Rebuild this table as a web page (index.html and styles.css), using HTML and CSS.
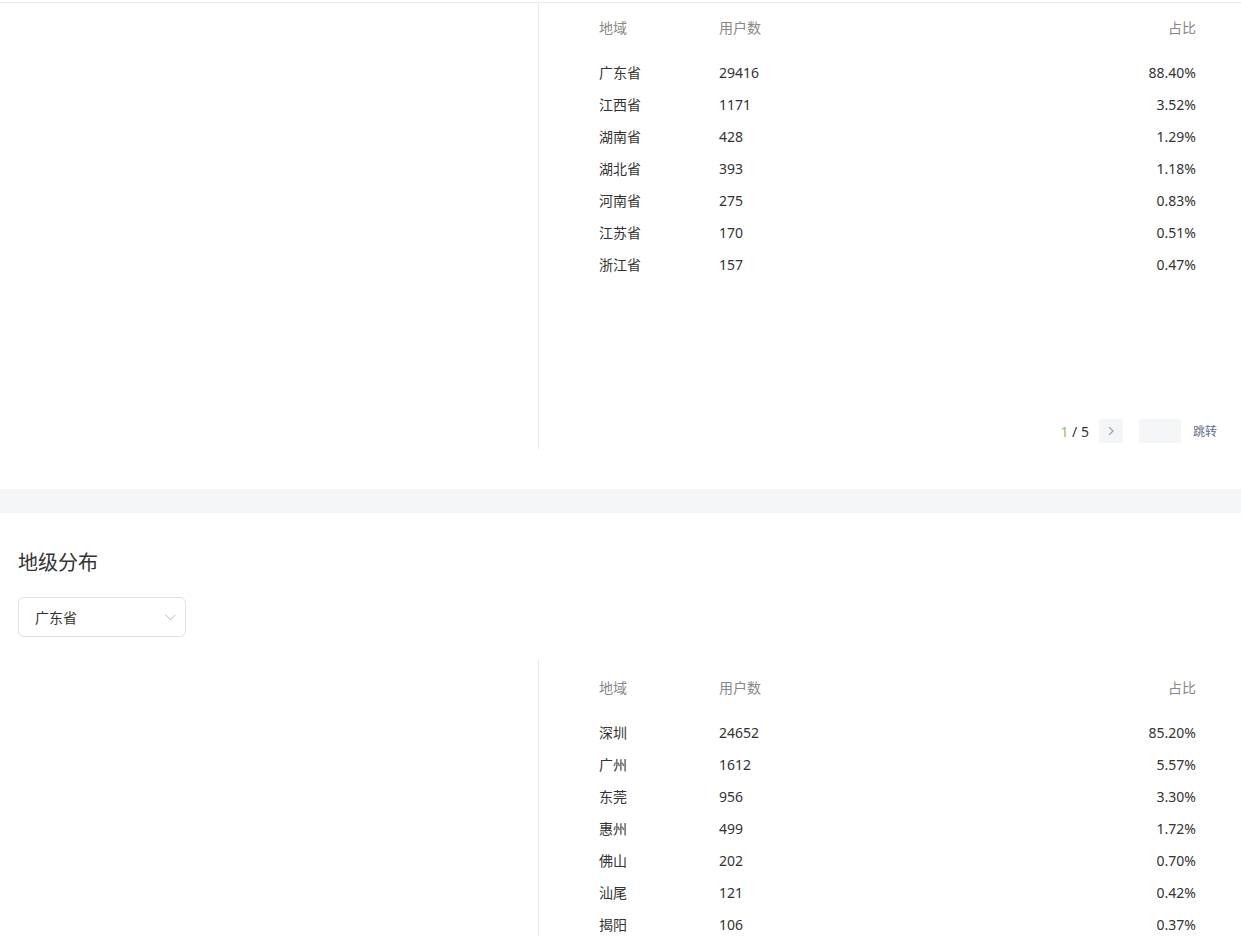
FILE: index.html
```html
<!DOCTYPE html>
<html lang="zh-CN">
<head>
  <meta charset="UTF-8" />
  <meta name="viewport" content="width=device-width, initial-scale=1.0" />
  <title>地域分布</title>
  <link rel="stylesheet" href="styles.css">
</head>
<body>

  <!-- 省级分布 -->
  <div class="card card-top">
    <div class="split">
      <div class="chart"></div>
      <div class="table-wrap">
        <table class="region-table">
          <thead>
            <tr><th>地域</th><th>用户数</th><th class="num">占比</th></tr>
          </thead>
          <tbody>
            <tr><td>广东省</td><td>29416</td><td class="num">88.40%</td></tr>
            <tr><td>江西省</td><td>1171</td><td class="num">3.52%</td></tr>
            <tr><td>湖南省</td><td>428</td><td class="num">1.29%</td></tr>
            <tr><td>湖北省</td><td>393</td><td class="num">1.18%</td></tr>
            <tr><td>河南省</td><td>275</td><td class="num">0.83%</td></tr>
            <tr><td>江苏省</td><td>170</td><td class="num">0.51%</td></tr>
            <tr><td>浙江省</td><td>157</td><td class="num">0.47%</td></tr>
          </tbody>
        </table>

        <div class="pager">
          <span class="pager-count"><em>1</em> / 5</span>
          <button class="pager-btn" type="button">
            <svg width="10" height="10" viewBox="0 0 10 10"><path d="M3.2 1.2 L7 5 L3.2 8.8" fill="none" stroke="#999" stroke-width="1.1"/></svg>
          </button>
          <input class="pager-input" type="text" />
          <span class="pager-go">跳转</span>
        </div>
      </div>
    </div>
  </div>

  <div class="band"></div>

  <!-- 地级分布 -->
  <div class="card card-city">
    <h2 class="title">地级分布</h2>
    <div class="select">
      <span>广东省</span>
      <svg width="11" height="7" viewBox="0 0 11 7"><path d="M0.5 0.8 L5.5 5.8 L10.5 0.8" fill="none" stroke="#b8b8b8" stroke-width="1"/></svg>
    </div>

    <div class="split split-city">
      <div class="chart"></div>
      <div class="table-wrap">
        <table class="region-table">
          <thead>
            <tr><th>地域</th><th>用户数</th><th class="num">占比</th></tr>
          </thead>
          <tbody>
            <tr><td>深圳</td><td>24652</td><td class="num">85.20%</td></tr>
            <tr><td>广州</td><td>1612</td><td class="num">5.57%</td></tr>
            <tr><td>东莞</td><td>956</td><td class="num">3.30%</td></tr>
            <tr><td>惠州</td><td>499</td><td class="num">1.72%</td></tr>
            <tr><td>佛山</td><td>202</td><td class="num">0.70%</td></tr>
            <tr><td>汕尾</td><td>121</td><td class="num">0.42%</td></tr>
            <tr><td>揭阳</td><td>106</td><td class="num">0.37%</td></tr>
          </tbody>
        </table>
      </div>
    </div>
  </div>

</body>
</html>
```

FILE: styles.css
```css
html, body {
  margin: 0;
  padding: 0;
}
body {
  font-family: "Noto Sans", "Noto Sans CJK SC", sans-serif;
  font-size: 14px;
  color: #333;
  background: #fff;
  overflow: hidden;
}

.card-top {
  margin-top: 2px;
  border-top: 1px solid #ececec;
}

.split {
  display: flex;
  height: 446px;
}
.chart {
  box-sizing: border-box;
  width: 539px;
  border-right: 1px solid #e6e6e6;
}
.table-wrap {
  flex: 1;
  display: flex;
  flex-direction: column;
  padding: 8px 24px 6px 60px;
}

.region-table {
  width: calc(100% - 21px);
  border-collapse: collapse;
}
.region-table th,
.region-table td {
  padding: 0;
  height: 32px;
  text-align: left;
  font-weight: normal;
  white-space: nowrap;
}
.region-table th {
  color: #888;
}
.region-table thead tr {
  border-bottom: 13px solid transparent;
}
.region-table th:first-child,
.region-table td:first-child {
  width: 120px;
}
.region-table .num {
  text-align: right;
}

.pager {
  margin-top: auto;
  display: flex;
  align-items: center;
  justify-content: flex-end;
  height: 24px;
}
.pager-count {
  color: #333;
  margin-right: 10px;
}
.pager-count em {
  font-style: normal;
  color: #8cc152;
}
.pager-btn {
  width: 24px;
  height: 24px;
  border: 0;
  border-radius: 2px;
  background: #f4f5f7;
  padding: 0;
  display: flex;
  align-items: center;
  justify-content: center;
}
.pager-input {
  box-sizing: border-box;
  width: 42px;
  height: 24px;
  border: 0;
  border-radius: 2px;
  background: #f4f5f7;
  margin-left: 16px;
}
.pager-go {
  margin-left: 12px;
  font-size: 12px;
  color: #5e6b86;
}

.band {
  height: 24px;
  margin-top: 40px;
  background: #f4f5f7;
}

.card-city {
  padding-top: 36px;
}
.title {
  margin: 0 0 20px 18px;
  font-size: 20px;
  line-height: 28px;
  font-weight: normal;
  color: #333;
}
.select {
  box-sizing: border-box;
  width: 168px;
  height: 40px;
  margin-left: 18px;
  border: 1px solid #e0e0e0;
  border-radius: 6px;
  display: flex;
  align-items: center;
  justify-content: space-between;
  padding: 0 9px 0 16px;
  color: #333;
}
.split-city {
  margin-top: 22px;
}
.split-city .table-wrap {
  padding-top: 12px;
}
```
